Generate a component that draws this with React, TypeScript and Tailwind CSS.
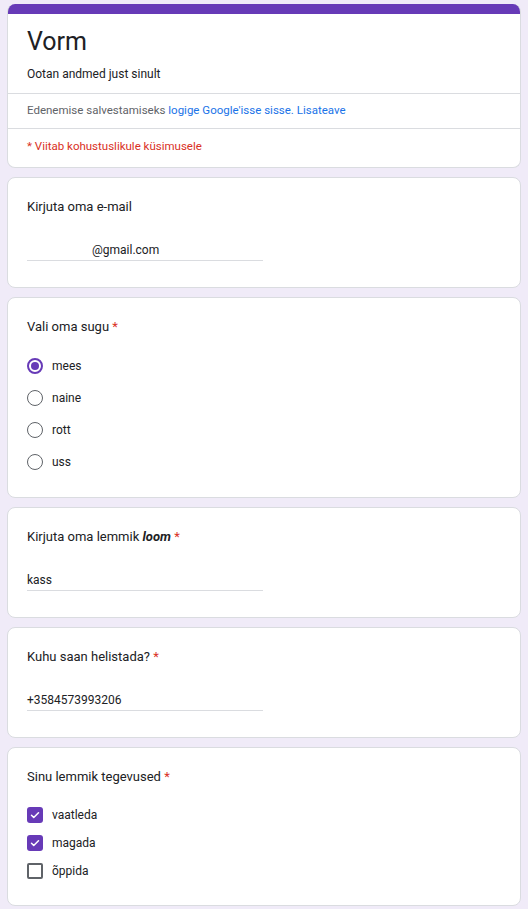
import React from "react";

const Star = () => <span className="text-[#d93025]"> *</span>;

function Card({ children, className = "" }: { children: React.ReactNode; className?: string }) {
  return (
    <div className={`mt-[9px] rounded-lg border border-[#dadce0] bg-white px-[19px] ${className}`}>{children}</div>
  );
}

function TextQ({ title, value, pad = 0 }: { title: React.ReactNode; value: string; pad?: number }) {
  return (
    <Card className="pt-[20px] pb-[26px]">
      <div className="text-[13px] leading-[18px] text-[#202124]">{title}</div>
      <div className="mt-[26px] w-[236px] border-b border-[#dadce0] pb-[2px] text-[12px] leading-[16px] text-[#202124]">
        <span style={{ paddingLeft: pad }}>{value}</span>
      </div>
    </Card>
  );
}

function Radio({ checked, label }: { checked?: boolean; label: string }) {
  return (
    <div className="flex h-[32px] items-center">
      {checked ? (
        <div className="flex h-[16px] w-[16px] items-center justify-center rounded-full border-2 border-[#673ab7]">
          <div className="h-[8px] w-[8px] rounded-full bg-[#673ab7]" />
        </div>
      ) : (
        <div className="h-[16px] w-[16px] rounded-full border-[1.5px] border-[#5f6368]" />
      )}
      <span className="ml-[9px] text-[12px] text-[#202124]">{label}</span>
    </div>
  );
}

function Check({ checked, label }: { checked?: boolean; label: string }) {
  return (
    <div className="flex h-[28px] items-center">
      {checked ? (
        <div className="flex h-[16px] w-[16px] items-center justify-center rounded-[3px] bg-[#673ab7]">
          <svg width="12" height="12" viewBox="0 0 24 24" fill="none">
            <path d="M5 12.5l4.5 4.5L19 7.5" stroke="white" strokeWidth="3" strokeLinecap="round" strokeLinejoin="round" />
          </svg>
        </div>
      ) : (
        <div className="h-[16px] w-[16px] rounded-[2px] border-2 border-[#5f6368]" />
      )}
      <span className="ml-[9px] text-[12px] text-[#202124]">{label}</span>
    </div>
  );
}

export default function App() {
  return (
    <div className="min-h-[909px] bg-[#f0ebf8] px-[7px] pt-[4px] pb-[4px]" style={{ fontFamily: "Roboto, Arial, sans-serif" }}>
      <div className="overflow-hidden rounded-lg border border-[#dadce0] border-t-0 bg-white">
        <div className="h-[10px] bg-[#673ab7]" />
        <div className="px-[19px] pt-[12px] pb-[10px] border-b border-[#dadce0]">
          <div className="text-[25px] leading-[32px] text-[#202124]">Vorm</div>
          <div className="mt-[7px] text-[12px] leading-[18px] text-[#202124]">Ootan andmed just sinult</div>
        </div>
        <div className="flex h-[35px] items-center border-b border-[#dadce0] px-[19px] text-[11.5px] text-[#5f6368]">
          <span>
            Edenemise salvestamiseks <span className="text-[#1a73e8]">logige Google'isse sisse.</span>{" "}
            <span className="text-[#1a73e8]">Lisateave</span>
          </span>
        </div>
        <div className="flex h-[38px] items-center px-[19px] pb-[2px] text-[11.5px] text-[#d93025]">* Viitab kohustuslikule küsimusele</div>
      </div>

      <TextQ title="Kirjuta oma e-mail" value="@gmail.com" pad={65} />

      <Card className="pt-[20px] pb-[19px]">
        <div className="text-[13px] leading-[18px] text-[#202124]">
          Vali oma sugu<Star />
        </div>
        <div className="mt-[14px]">
          <Radio checked label="mees" />
          <Radio label="naine" />
          <Radio label="rott" />
          <Radio label="uss" />
        </div>
      </Card>

      <TextQ
        title={
          <>
            Kirjuta oma lemmik <b className="italic">loom</b>
            <Star />
          </>
        }
        value="kass"
      />
      <TextQ
        title={
          <>
            Kuhu saan helistada?<Star />
          </>
        }
        value="+3584573993206"
      />

      <Card className="pt-[20px] pb-[20px]">
        <div className="text-[13px] leading-[18px] text-[#202124]">
          Sinu lemmik tegevused<Star />
        </div>
        <div className="mt-[15px]">
          <Check checked label="vaatleda" />
          <Check checked label="magada" />
          <Check label="õppida" />
        </div>
      </Card>
    </div>
  );
}
